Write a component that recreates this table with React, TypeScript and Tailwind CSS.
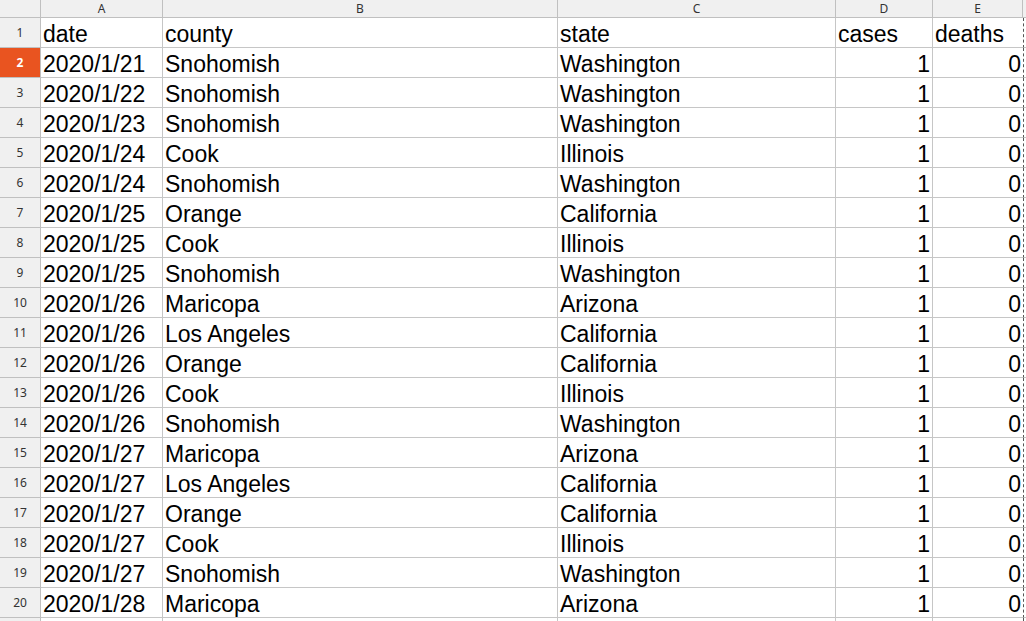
import React from 'react';

const rows: [string, string, string, number, number][] = [
  ['2020/1/21', 'Snohomish', 'Washington', 1, 0],
  ['2020/1/22', 'Snohomish', 'Washington', 1, 0],
  ['2020/1/23', 'Snohomish', 'Washington', 1, 0],
  ['2020/1/24', 'Cook', 'Illinois', 1, 0],
  ['2020/1/24', 'Snohomish', 'Washington', 1, 0],
  ['2020/1/25', 'Orange', 'California', 1, 0],
  ['2020/1/25', 'Cook', 'Illinois', 1, 0],
  ['2020/1/25', 'Snohomish', 'Washington', 1, 0],
  ['2020/1/26', 'Maricopa', 'Arizona', 1, 0],
  ['2020/1/26', 'Los Angeles', 'California', 1, 0],
  ['2020/1/26', 'Orange', 'California', 1, 0],
  ['2020/1/26', 'Cook', 'Illinois', 1, 0],
  ['2020/1/26', 'Snohomish', 'Washington', 1, 0],
  ['2020/1/27', 'Maricopa', 'Arizona', 1, 0],
  ['2020/1/27', 'Los Angeles', 'California', 1, 0],
  ['2020/1/27', 'Orange', 'California', 1, 0],
  ['2020/1/27', 'Cook', 'Illinois', 1, 0],
  ['2020/1/27', 'Snohomish', 'Washington', 1, 0],
  ['2020/1/28', 'Maricopa', 'Arizona', 1, 0],
];

const cols = 'grid grid-cols-[41px_122px_395px_278px_97px_90px_1fr]';
const cell = 'h-[30px] border-r border-b border-[#c6c6c6] text-[23px] leading-[27px] pt-[3px] text-black whitespace-nowrap overflow-hidden';
const rowHead = "h-[30px] border-r border-b border-[#c0c0c0] flex items-center justify-center text-[12px] font-['Noto_Sans',sans-serif]";
const headCell = "h-[18px] border-r border-b border-[#c0c0c0] bg-[#f0f0f0] flex items-center justify-center text-[12px] text-[#333] font-['Noto_Sans',sans-serif]";

export default function App() {
  return (
    <div className="w-[1026px] h-[621px] overflow-hidden bg-white font-['Liberation_Sans',Arial,sans-serif]">
      <div className={cols}>
        <div className={headCell} />
        {['A', 'B', 'C', 'D', 'E'].map((c) => (
          <div key={c} className={headCell}>{c}</div>
        ))}
        <div className="h-[18px] border-b border-[#c0c0c0] bg-[#f0f0f0]" />

        <div className={`${rowHead} bg-[#f0f0f0] text-[#333]`}>1</div>
        <div className={`${cell} pl-[2px]`}>date</div>
        <div className={`${cell} pl-[2px]`}>county</div>
        <div className={`${cell} pl-[2px]`}>state</div>
        <div className={`${cell} pl-[2px]`}>cases</div>
        <div className={`${cell} pl-[2px] border-r-0`}>deaths</div>
        <div className="h-[30px] border-l border-dashed border-[#555] border-b border-b-[#c6c6c6]" />

        {rows.map((r, i) => {
          const n = i + 2;
          const sel = n === 2;
          return (
            <React.Fragment key={n}>
              <div className={`${rowHead} ${sel ? 'bg-[#e95420] text-white font-bold' : 'bg-[#f0f0f0] text-[#333]'}`}>
                {n}
              </div>
              <div className={`${cell} pl-[2px]`}>{r[0]}</div>
              <div className={`${cell} pl-[2px]`}>{r[1]}</div>
              <div className={`${cell} pl-[2px]`}>{r[2]}</div>
              <div className={`${cell} text-right pr-[2px]`}>{r[3]}</div>
              <div className={`${cell} text-right pr-[2px] border-r-0`}>{r[4]}</div>
              <div className="h-[30px] border-l border-dashed border-[#555] border-b border-b-[#c6c6c6]" />
            </React.Fragment>
          );
        })}

        <div className={`${rowHead} bg-[#f0f0f0]`} />
        <div className={cell} />
        <div className={cell} />
        <div className={cell} />
        <div className={cell} />
        <div className={`${cell} border-r-0`} />
        <div className="h-[30px] border-l border-dashed border-[#555]" />
      </div>
    </div>
  );
}
